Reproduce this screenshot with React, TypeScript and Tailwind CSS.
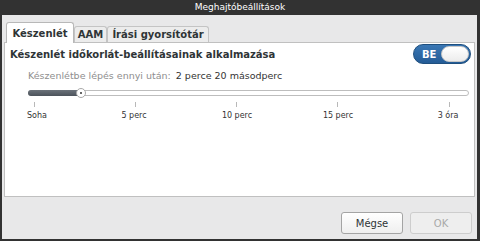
const TICKS = [
  { x: 34, label: "Soha", lx: 37 },
  { x: 135, label: "5 perc", lx: 134 },
  { x: 236, label: "10 perc", lx: 237 },
  { x: 337, label: "15 perc", lx: 338 },
  { x: 449, label: "3 óra", lx: 448 },
];

export default function App() {
  return (
    <div
      className="flex h-[241px] w-[480px] flex-col bg-[#323232] text-[#2e3436]"
      style={{ fontFamily: '"DejaVu Sans", sans-serif' }}
    >
      {/* címsor */}
      <div className="flex h-[15px] items-center justify-center text-[9px] text-white">
        Meghajtóbeállítások
      </div>

      <div className="mb-[2px] ml-[2px] mr-[3px] flex flex-1 flex-col bg-[#e8e8e9] px-[2px]">
        {/* fülek */}
        <div className="mt-[7px] flex items-end pl-[2px]">
          <div className="relative z-10 -mb-px flex h-[21px] w-[68px] items-center justify-center rounded-t-[3px] border border-b-0 border-[#b8b8b8] bg-white text-[10px] font-bold">
            Készenlét
          </div>
          <div className="flex h-[16px] w-[33px] items-center justify-center rounded-t-[3px] border border-b-0 border-[#c4c4c4] bg-[#ececec] text-[10px] font-bold">
            AAM
          </div>
          <div className="flex h-[16px] w-[102px] items-center justify-center rounded-t-[3px] border border-b-0 border-[#c4c4c4] bg-[#ececec] text-[10px] font-bold">
            Írási gyorsítótár
          </div>
        </div>

        {/* panel */}
        <div className="flex h-[155px] flex-col border border-[#c0c0c0] bg-white">
          <div className="mt-px flex h-[20px] items-center justify-between pl-[5px] pr-[3px]">
            <span className="text-[10px] font-bold">Készenlét időkorlát-beállításainak alkalmazása</span>
            <div className="flex h-[20px] w-[58px] items-center rounded-full border border-[#1f4f7e] bg-gradient-to-b from-[#3a77b4] to-[#245c96] pl-[8px] pr-[1px]">
              <span className="text-[10px] font-bold text-white">BE</span>
              <span className="ml-auto h-[16px] w-[28px] rounded-full border border-[#c8c8c8] bg-gradient-to-b from-white to-[#ececec]" />
            </div>
          </div>

          <div className="mt-[5px] flex h-[14px] items-center pl-[23px] text-[9.5px]">
            <span className="text-[#8e8e8e]">Készenlétbe lépés ennyi után:</span>
            <span className="ml-[5px] text-[#333]">2 perce 20 másodperc</span>
          </div>

          {/* csúszka */}
          <div className="relative mt-[7px] h-[40px]">
            <div className="absolute left-[23px] top-[0px] h-[6px] w-[441px] rounded-full border border-[#bdbdbd] bg-white" />
            <div className="absolute left-[23px] top-[0px] h-[6px] w-[54px] rounded-l-full bg-gradient-to-b from-[#6b727a] to-[#4c535b]" />
            <div className="absolute left-[71px] top-[-2px] flex h-[10px] w-[10px] items-center justify-center rounded-full border border-[#a8a8a8] bg-white">
              <span className="h-[2px] w-[2px] rounded-full bg-[#333]" />
            </div>
            {TICKS.map((t) => (
              <div key={t.label}>
                <span
                  className="absolute top-[12px] h-[5px] w-px bg-[#b8b8b8]"
                  style={{ left: t.x - 5 }}
                />
                <span
                  className="absolute top-[20px] -translate-x-1/2 whitespace-nowrap text-[8px] text-[#333]"
                  style={{ left: t.lx - 5 }}
                >
                  {t.label}
                </span>
              </div>
            ))}
          </div>
        </div>

        {/* gombok */}
        <div className="mt-[15px] flex justify-end gap-[7px] pr-[3px]">
          <button className="h-[22px] w-[62px] rounded-[3px] border border-[#a4a4a4] bg-gradient-to-b from-white to-[#efefef] text-[10px] text-[#2e3436]">
            Mégse
          </button>
          <button
            disabled
            className="h-[22px] w-[62px] rounded-[3px] border border-[#cdcdcd] bg-[#eeeeee] text-[10px] text-[#a9a9a9]"
          >
            OK
          </button>
        </div>
      </div>
    </div>
  );
}
